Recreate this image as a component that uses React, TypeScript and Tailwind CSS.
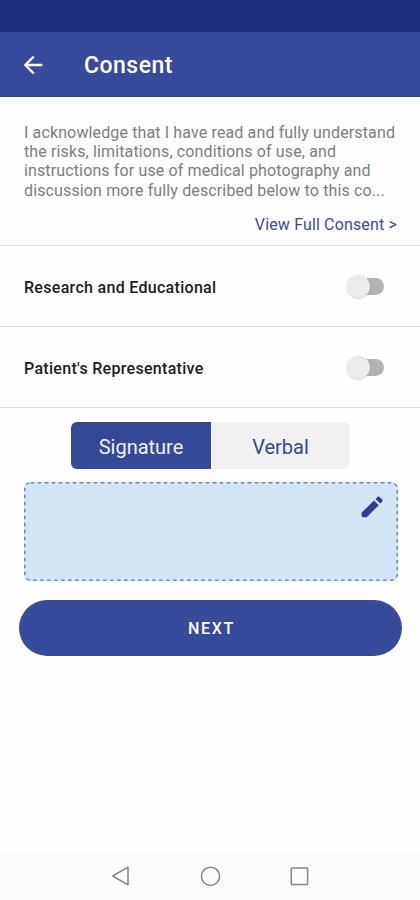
import React, { useState } from 'react';

interface ConsentToggleProps {
  label: string;
  checked: boolean;
  onChange: (checked: boolean) => void;
}

const ConsentToggle: React.FC<ConsentToggleProps> = ({ label, checked, onChange }) => {
  return (
    <div className="flex h-[81px] items-center justify-between border-b border-[#dedede] pl-6 pr-9">
      <span className="whitespace-nowrap pt-[3px] text-[16px] font-medium tracking-[0.3px] text-[#1c1c1c]">{label}</span>
      <button
        type="button"
        role="switch"
        aria-checked={checked}
        aria-label={label}
        onClick={() => onChange(!checked)}
        className={`mt-px flex h-6 w-[37px] items-center ${checked ? 'flex-row-reverse' : ''}`}
      >
        <span className="z-10 h-[23px] w-[23px] shrink-0 rounded-full bg-[#ececec] shadow-[0_0.5px_1.5px_rgba(0,0,0,0.22)]" />
        <span className="-ml-3 h-[17px] w-[26px] shrink-0 rounded-full bg-[#b3b3b3]" />
      </button>
    </div>
  );
};

const App: React.FC = () => {
  const [research, setResearch] = useState(false);
  const [representative, setRepresentative] = useState(false);
  const [mode, setMode] = useState<'signature' | 'verbal'>('signature');

  return (
    <div className="flex h-[900px] w-[420px] flex-col overflow-hidden bg-[#fefefe] font-['Roboto',sans-serif]">
      <div className="h-8 shrink-0 bg-[#1b2f7d]" />
      <header className="flex h-[65px] shrink-0 items-center border-b border-[#2b3f8c] bg-[#364b9b] text-white">
        <svg className="ml-[19px] mt-px h-[28px] w-[28px]" viewBox="0 0 24 24" fill="currentColor">
          <path d="M20 11H7.83l5.59-5.59L12 4l-8 8 8 8 1.41-1.41L7.83 13H20v-2z" />
        </svg>
        <h1 className="ml-[37px] pt-[5px] text-[23px] font-medium tracking-[0.5px]">Consent</h1>
      </header>

      <section className="flex h-[149px] shrink-0 flex-col border-b border-[#e2e2e2] pl-6 pr-[23px] pt-[26px]">
        <p className="whitespace-nowrap text-[16px] leading-[19.2px] tracking-[0.13px] text-[#7d7d7d]">
          I acknowledge that I have read and fully understand
          <br />
          the risks, limitations, conditions of use, and
          <br />
          instructions for use of medical photography and
          <br />
          discussion more fully described below to this co...
        </p>
        <a href="#" className="mt-[15px] self-end text-[16px] leading-[19px] tracking-[0.15px] text-[#3d4a8f]">
          View Full Consent &gt;
        </a>
      </section>

      <ConsentToggle label="Research and Educational" checked={research} onChange={setResearch} />
      <ConsentToggle label="Patient's Representative" checked={representative} onChange={setRepresentative} />

      <div className="ml-[71px] mr-[70px] mt-[14px] flex h-[47px] shrink-0 overflow-hidden rounded-md text-[20px]">
        <button
          type="button"
          onClick={() => setMode('signature')}
          className={`w-[140px] pt-0.5 ${mode === 'signature' ? 'bg-[#334998] text-[#eef2fc]' : 'bg-[#f1f1f1] text-[#37478f]'}`}
        >
          Signature
        </button>
        <button
          type="button"
          onClick={() => setMode('verbal')}
          className={`flex-1 pt-0.5 ${mode === 'verbal' ? 'bg-[#334998] text-[#eef2fc]' : 'bg-[#f1f1f1] text-[#37478f]'}`}
        >
          Verbal
        </button>
      </div>

      <div className="relative ml-6 mr-[22px] mt-[13px] flex h-[99px] shrink-0 justify-end rounded-md bg-[#d3e5f7]">
        <svg className="absolute inset-0 h-full w-full" viewBox="0 0 374 99" fill="none">
          <rect x="0.75" y="0.75" width="372.5" height="97.5" rx="6" stroke="#6d8bad" strokeWidth="1.5" strokeDasharray="3.5 3.5" />
        </svg>
        <svg className="mr-3 mt-[11px] h-7 w-7 text-[#2f3f94]" viewBox="0 0 28 28" fill="currentColor">
          <path d="M3.8 19.6 16 7.4 20.8 12.2 8.6 24.2H5c-.8 0-1.4-.6-1.4-1.4v-2.6c0-.3.1-.4.2-.6z" />
          <path d="m17.6 5.9 1.9-1.9c.6-.6 1.5-.6 2.1 0l2.6 2.6c.6.6.6 1.5 0 2.1l-1.9 1.9z" />
        </svg>
      </div>

      <button
        type="button"
        className="ml-[19px] mr-[18px] mt-[19px] h-14 shrink-0 rounded-full bg-[#364b9b] pl-0.5 pt-px text-[16px] font-medium tracking-[1.7px] text-white"
      >
        NEXT
      </button>

      <nav className="mt-auto flex h-12 shrink-0 items-center bg-[#fbfbfb] text-[#858585]">
        <svg className="ml-[111px] h-5 w-5" viewBox="0 0 20 20" fill="none" stroke="currentColor" strokeWidth="1.5" strokeLinejoin="round">
          <path d="M17 1.2v17.6L1.7 10z" />
        </svg>
        <svg className="ml-[69px] h-5 w-5 overflow-visible" viewBox="0 0 20 20" fill="none" stroke="currentColor" strokeWidth="1.5">
          <circle cx="10.5" cy="10.3" r="9.1" />
        </svg>
        <svg className="ml-[69px] h-5 w-5" viewBox="0 0 20 20" fill="none" stroke="currentColor" strokeWidth="1.5">
          <rect x="2.2" y="2" width="16.4" height="16.4" rx="0.8" />
        </svg>
      </nav>
    </div>
  );
};

export default App;
